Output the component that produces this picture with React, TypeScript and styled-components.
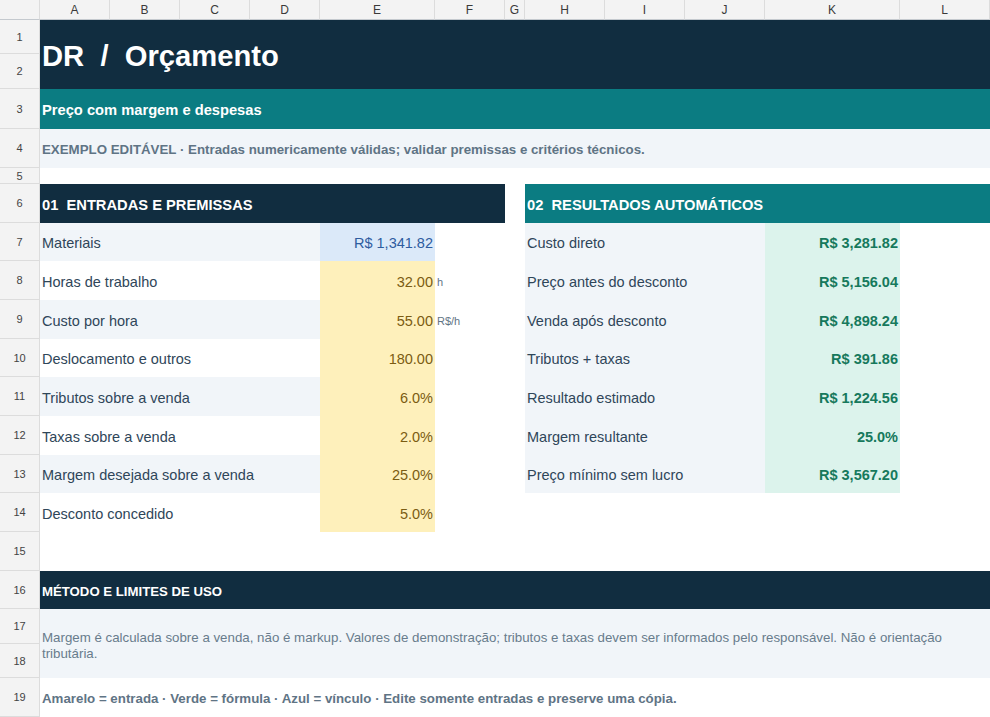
import React from "react";
import styled, { createGlobalStyle } from "styled-components";

const GlobalStyle = createGlobalStyle`
  html, body {
    margin: 0;
    padding: 0;
    background: #ffffff;
  }
  body {
    font-family: "Liberation Sans", Arial, sans-serif;
    overflow: hidden;
  }
`;

const colors = {
  navy: "#112d40",
  teal: "#0b7c82",
  light: "#f1f5f9",
  blue: "#dbe9f9",
  yellow: "#fef0bb",
  green: "#dcf3ec",
  label: "#2f4659",
  muted: "#5f7485",
};

const COLS = ["A", "B", "C", "D", "E", "F", "G", "H", "I", "J", "K", "L"];
const ROW_HEIGHTS = [34, 35, 40, 39, 16, 39, 38, 39, 39, 38, 39, 39, 38, 39, 39, 38, 35, 34, 39];

const Sheet = styled.div`
  display: grid;
  grid-template-columns: 40px 70px 70px 70px 70px 115px 70px 20px 80px 80px 80px 135px 90px;
  grid-template-rows: 20px ${ROW_HEIGHTS.map((h) => `${h}px`).join(" ")};
  width: 990px;
  height: 717px;
  overflow: hidden;
`;

const Corner = styled.div`
  grid-column: 1;
  grid-row: 1;
  background: #f3f3f3;
  border-right: 1px solid #dcdcdc;
  border-bottom: 1px solid #c4c9ce;
`;

const ColHead = styled.div<{ $col: number }>`
  grid-column: ${({ $col }) => $col};
  grid-row: 1;
  display: flex;
  align-items: center;
  justify-content: center;
  background: #f3f3f3;
  border-right: 1px solid #dcdcdc;
  border-bottom: 1px solid #c4c9ce;
  font-size: 12px;
  color: #3a3a3a;
`;

const RowHead = styled.div<{ $row: number }>`
  grid-column: 1;
  grid-row: ${({ $row }) => $row + 1};
  display: flex;
  align-items: center;
  justify-content: center;
  background: #f3f3f3;
  border-right: 1px solid #dcdcdc;
  border-bottom: 1px solid #dcdcdc;
  font-size: 11px;
  color: #444;
`;

type Tone = "navy" | "teal" | "light" | "blue" | "yellow" | "green" | "none";

const Cell = styled.div<{
  $col: string;
  $row: string;
  $bg?: Tone;
  $align?: "left" | "right";
}>`
  grid-column: ${({ $col }) => $col};
  grid-row: ${({ $row }) => $row};
  display: flex;
  align-items: center;
  justify-content: ${({ $align }) => ($align === "right" ? "flex-end" : "flex-start")};
  padding: 2px 2px 0;
  min-width: 0;
  background: ${({ $bg }) => ($bg && $bg !== "none" ? colors[$bg] : "transparent")};
  white-space: nowrap;
  overflow: visible;
`;

const Title = styled.span`
  font-size: 29.2px;
  font-weight: 700;
  color: #ffffff;
  white-space: pre;
  margin-top: 1px;
`;

const Subtitle = styled.span`
  font-size: 14.7px;
  font-weight: 700;
  color: #ffffff;
`;

const Note = styled.span`
  font-size: 13.3px;
  font-weight: 700;
  color: ${colors.muted};
`;

const SectionTitle = styled.span<{ $size?: number }>`
  font-size: ${({ $size }) => $size ?? 14.7}px;
  font-weight: 700;
  color: #ffffff;
  white-space: pre;
`;

const Label = styled.span`
  font-size: 14.5px;
  color: ${colors.label};
`;

const Value = styled.span<{ $kind: "input" | "link" | "formula" }>`
  font-size: 14.5px;
  font-weight: ${({ $kind }) => ($kind === "formula" ? 700 : 400)};
  color: ${({ $kind }) =>
    $kind === "input" ? "#7b5c12" : $kind === "link" ? "#2e5c9f" : "#16795c"};
`;

const Unit = styled.span`
  font-size: 11px;
  color: ${colors.muted};
`;

const Paragraph = styled.p`
  margin: 0;
  font-size: 13.3px;
  line-height: 16px;
  color: #687c8c;
  white-space: normal;
  padding-top: 2px;
`;

type InputRow = {
  label: string;
  value: string;
  kind: "input" | "link";
  unit?: string;
};

const inputs: InputRow[] = [
  { label: "Materiais", value: "R$ 1,341.82", kind: "link" },
  { label: "Horas de trabalho", value: "32.00", kind: "input", unit: "h" },
  { label: "Custo por hora", value: "55.00", kind: "input", unit: "R$/h" },
  { label: "Deslocamento e outros", value: "180.00", kind: "input" },
  { label: "Tributos sobre a venda", value: "6.0%", kind: "input" },
  { label: "Taxas sobre a venda", value: "2.0%", kind: "input" },
  { label: "Margem desejada sobre a venda", value: "25.0%", kind: "input" },
  { label: "Desconto concedido", value: "5.0%", kind: "input" },
];

const results = [
  { label: "Custo direto", value: "R$ 3,281.82" },
  { label: "Preço antes do desconto", value: "R$ 5,156.04" },
  { label: "Venda após desconto", value: "R$ 4,898.24" },
  { label: "Tributos + taxas", value: "R$ 391.86" },
  { label: "Resultado estimado", value: "R$ 1,224.56" },
  { label: "Margem resultante", value: "25.0%" },
  { label: "Preço mínimo sem lucro", value: "R$ 3,567.20" },
];

// sheet row n lives on grid row n + 1 (row 1 of the grid is the letters bar)
const r = (n: number, span = 1) => `${n + 1} / span ${span}`;

export default function App() {
  return (
    <>
      <GlobalStyle />
      <Sheet>
        <Corner />
        {COLS.map((c, i) => (
          <ColHead key={c} $col={i + 2}>
            {c}
          </ColHead>
        ))}
        {ROW_HEIGHTS.map((_, i) => (
          <RowHead key={i} $row={i + 1}>
            {i + 1}
          </RowHead>
        ))}

        <Cell $col="2 / 14" $row={r(1, 2)} $bg="navy">
          <Title>DR  /  Orçamento</Title>
        </Cell>
        <Cell $col="2 / 14" $row={r(3)} $bg="teal">
          <Subtitle>Preço com margem e despesas</Subtitle>
        </Cell>
        <Cell $col="2 / 14" $row={r(4)} $bg="light">
          <Note>
            EXEMPLO EDITÁVEL · Entradas numericamente válidas; validar premissas e critérios técnicos.
          </Note>
        </Cell>

        <Cell $col="2 / 8" $row={r(6)} $bg="navy">
          <SectionTitle>01  ENTRADAS E PREMISSAS</SectionTitle>
        </Cell>
        <Cell $col="9 / 14" $row={r(6)} $bg="teal">
          <SectionTitle>02  RESULTADOS AUTOMÁTICOS</SectionTitle>
        </Cell>

        {inputs.map((row, i) => {
          const n = 7 + i;
          return (
            <React.Fragment key={row.label}>
              <Cell $col="2 / 6" $row={r(n)} $bg={i % 2 === 0 ? "light" : "none"}>
                <Label>{row.label}</Label>
              </Cell>
              <Cell
                $col="6"
                $row={r(n)}
                $bg={row.kind === "link" ? "blue" : "yellow"}
                $align="right"
              >
                <Value $kind={row.kind}>{row.value}</Value>
              </Cell>
              {row.unit && (
                <Cell $col="7" $row={r(n)}>
                  <Unit>{row.unit}</Unit>
                </Cell>
              )}
            </React.Fragment>
          );
        })}

        {results.map((row, i) => {
          const n = 7 + i;
          return (
            <React.Fragment key={row.label}>
              <Cell $col="9 / 12" $row={r(n)} $bg="light">
                <Label>{row.label}</Label>
              </Cell>
              <Cell $col="12" $row={r(n)} $bg="green" $align="right">
                <Value $kind="formula">{row.value}</Value>
              </Cell>
            </React.Fragment>
          );
        })}

        <Cell $col="2 / 14" $row={r(16)} $bg="navy">
          <SectionTitle $size={13.2}>MÉTODO E LIMITES DE USO</SectionTitle>
        </Cell>
        <Cell $col="2 / 14" $row={r(17, 2)} $bg="light">
          <Paragraph>
            Margem é calculada sobre a venda, não é markup. Valores de demonstração; tributos e
            taxas devem ser informados pelo responsável. Não é orientação tributária.
          </Paragraph>
        </Cell>
        <Cell $col="2 / 14" $row={r(19)}>
          <Note>
            Amarelo = entrada · Verde = fórmula · Azul = vínculo · Edite somente entradas e
            preserve uma cópia.
          </Note>
        </Cell>
      </Sheet>
    </>
  );
}
